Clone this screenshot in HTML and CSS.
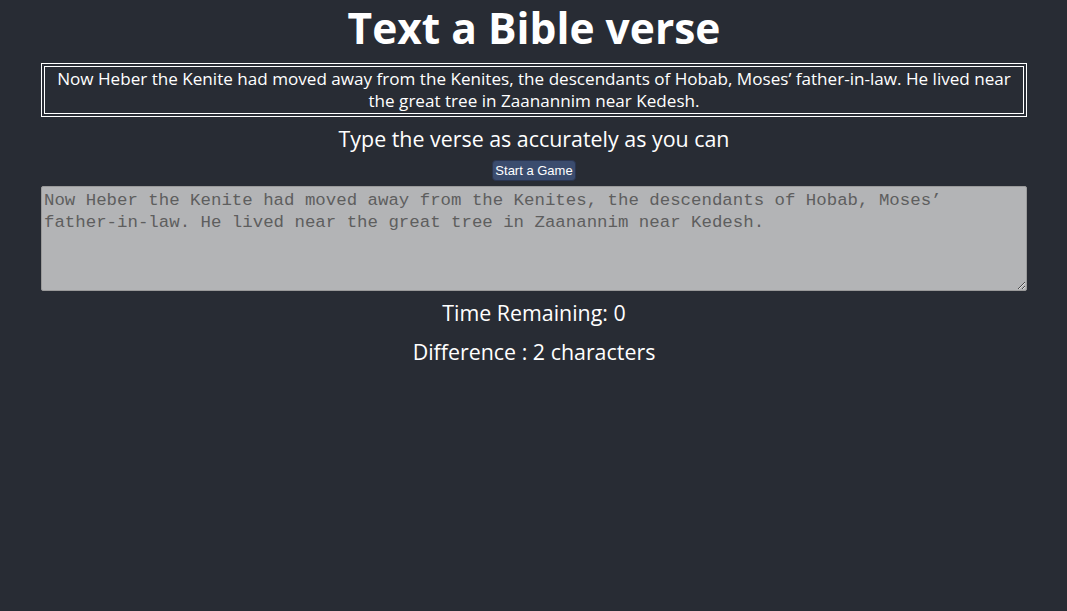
FILE: index.html
```html
<!DOCTYPE html>
<html>
<head>
<meta charset="utf-8">
<link rel="stylesheet" href="styles.css">
</head>
<body>
<div class="app">
  <h1 class="title">Text a Bible verse</h1>
  <div class="verse">Now Heber the Kenite had moved away from the Kenites, the descendants of Hobab, Moses’ father-in-law. He lived near the great tree in Zaanannim near Kedesh.</div>
  <div class="prompt">Type the verse as accurately as you can</div>
  <button class="start">Start a Game</button>
  <textarea class="entry" disabled>Now Heber the Kenite had moved away from the Kenites, the descendants of Hobab, Moses’ father-in-law. He lived near the great tree in Zaanannim near Kedesh.</textarea>
  <div class="stat stat-time">Time Remaining: 0</div>
  <div class="stat stat-diff">Difference : 2 characters</div>
</div>
</body>
</html>
```
FILE: styles.css
```css
html, body {
  margin: 0;
  padding: 0;
  background: #282c34;
  height: 100%;
}
.app {
  display: flex;
  flex-direction: column;
  align-items: center;
  padding: 0 40px 0 41px;
  color: #ffffff;
  font-family: "Open Sans", "Noto Sans", sans-serif;
  text-align: center;
}
.title {
  margin: 0;
  font-size: 42.5px;
  font-weight: 700;
  line-height: 56px;
}
.verse {
  align-self: stretch;
  margin-top: 7px;
  border: 4px double #ffffff;
  padding: 1px 8px;
  font-size: 17.1px;
  line-height: 22px;
}
.prompt {
  margin-top: 7px;
  font-size: 21.4px;
  line-height: 30px;
}
.start {
  margin-top: 6px;
  box-sizing: border-box;
  background: #3b4c6e;
  color: #ffffff;
  border: 1px solid #2a3550;
  border-radius: 4px;
  font-family: "Liberation Sans", Arial, sans-serif;
  font-size: 13px;
  padding: 2px 2px;
  height: 21px;
  line-height: 15px;
}
.entry {
  align-self: stretch;
  margin-top: 5px;
  height: 105px;
  box-sizing: border-box;
  background: #b3b4b6;
  color: #5e5e5e;
  border: 1px solid #9a9a9a;
  border-radius: 2px;
  padding: 3px 2px;
  font-family: "Liberation Mono", monospace;
  font-size: 17.4px;
  line-height: 22px;
  resize: vertical;
}
.stat {
  font-size: 21.4px;
  line-height: 30px;
}
.stat-time {
  margin-top: 7px;
}
.stat-diff {
  margin-top: 9px;
}
```
